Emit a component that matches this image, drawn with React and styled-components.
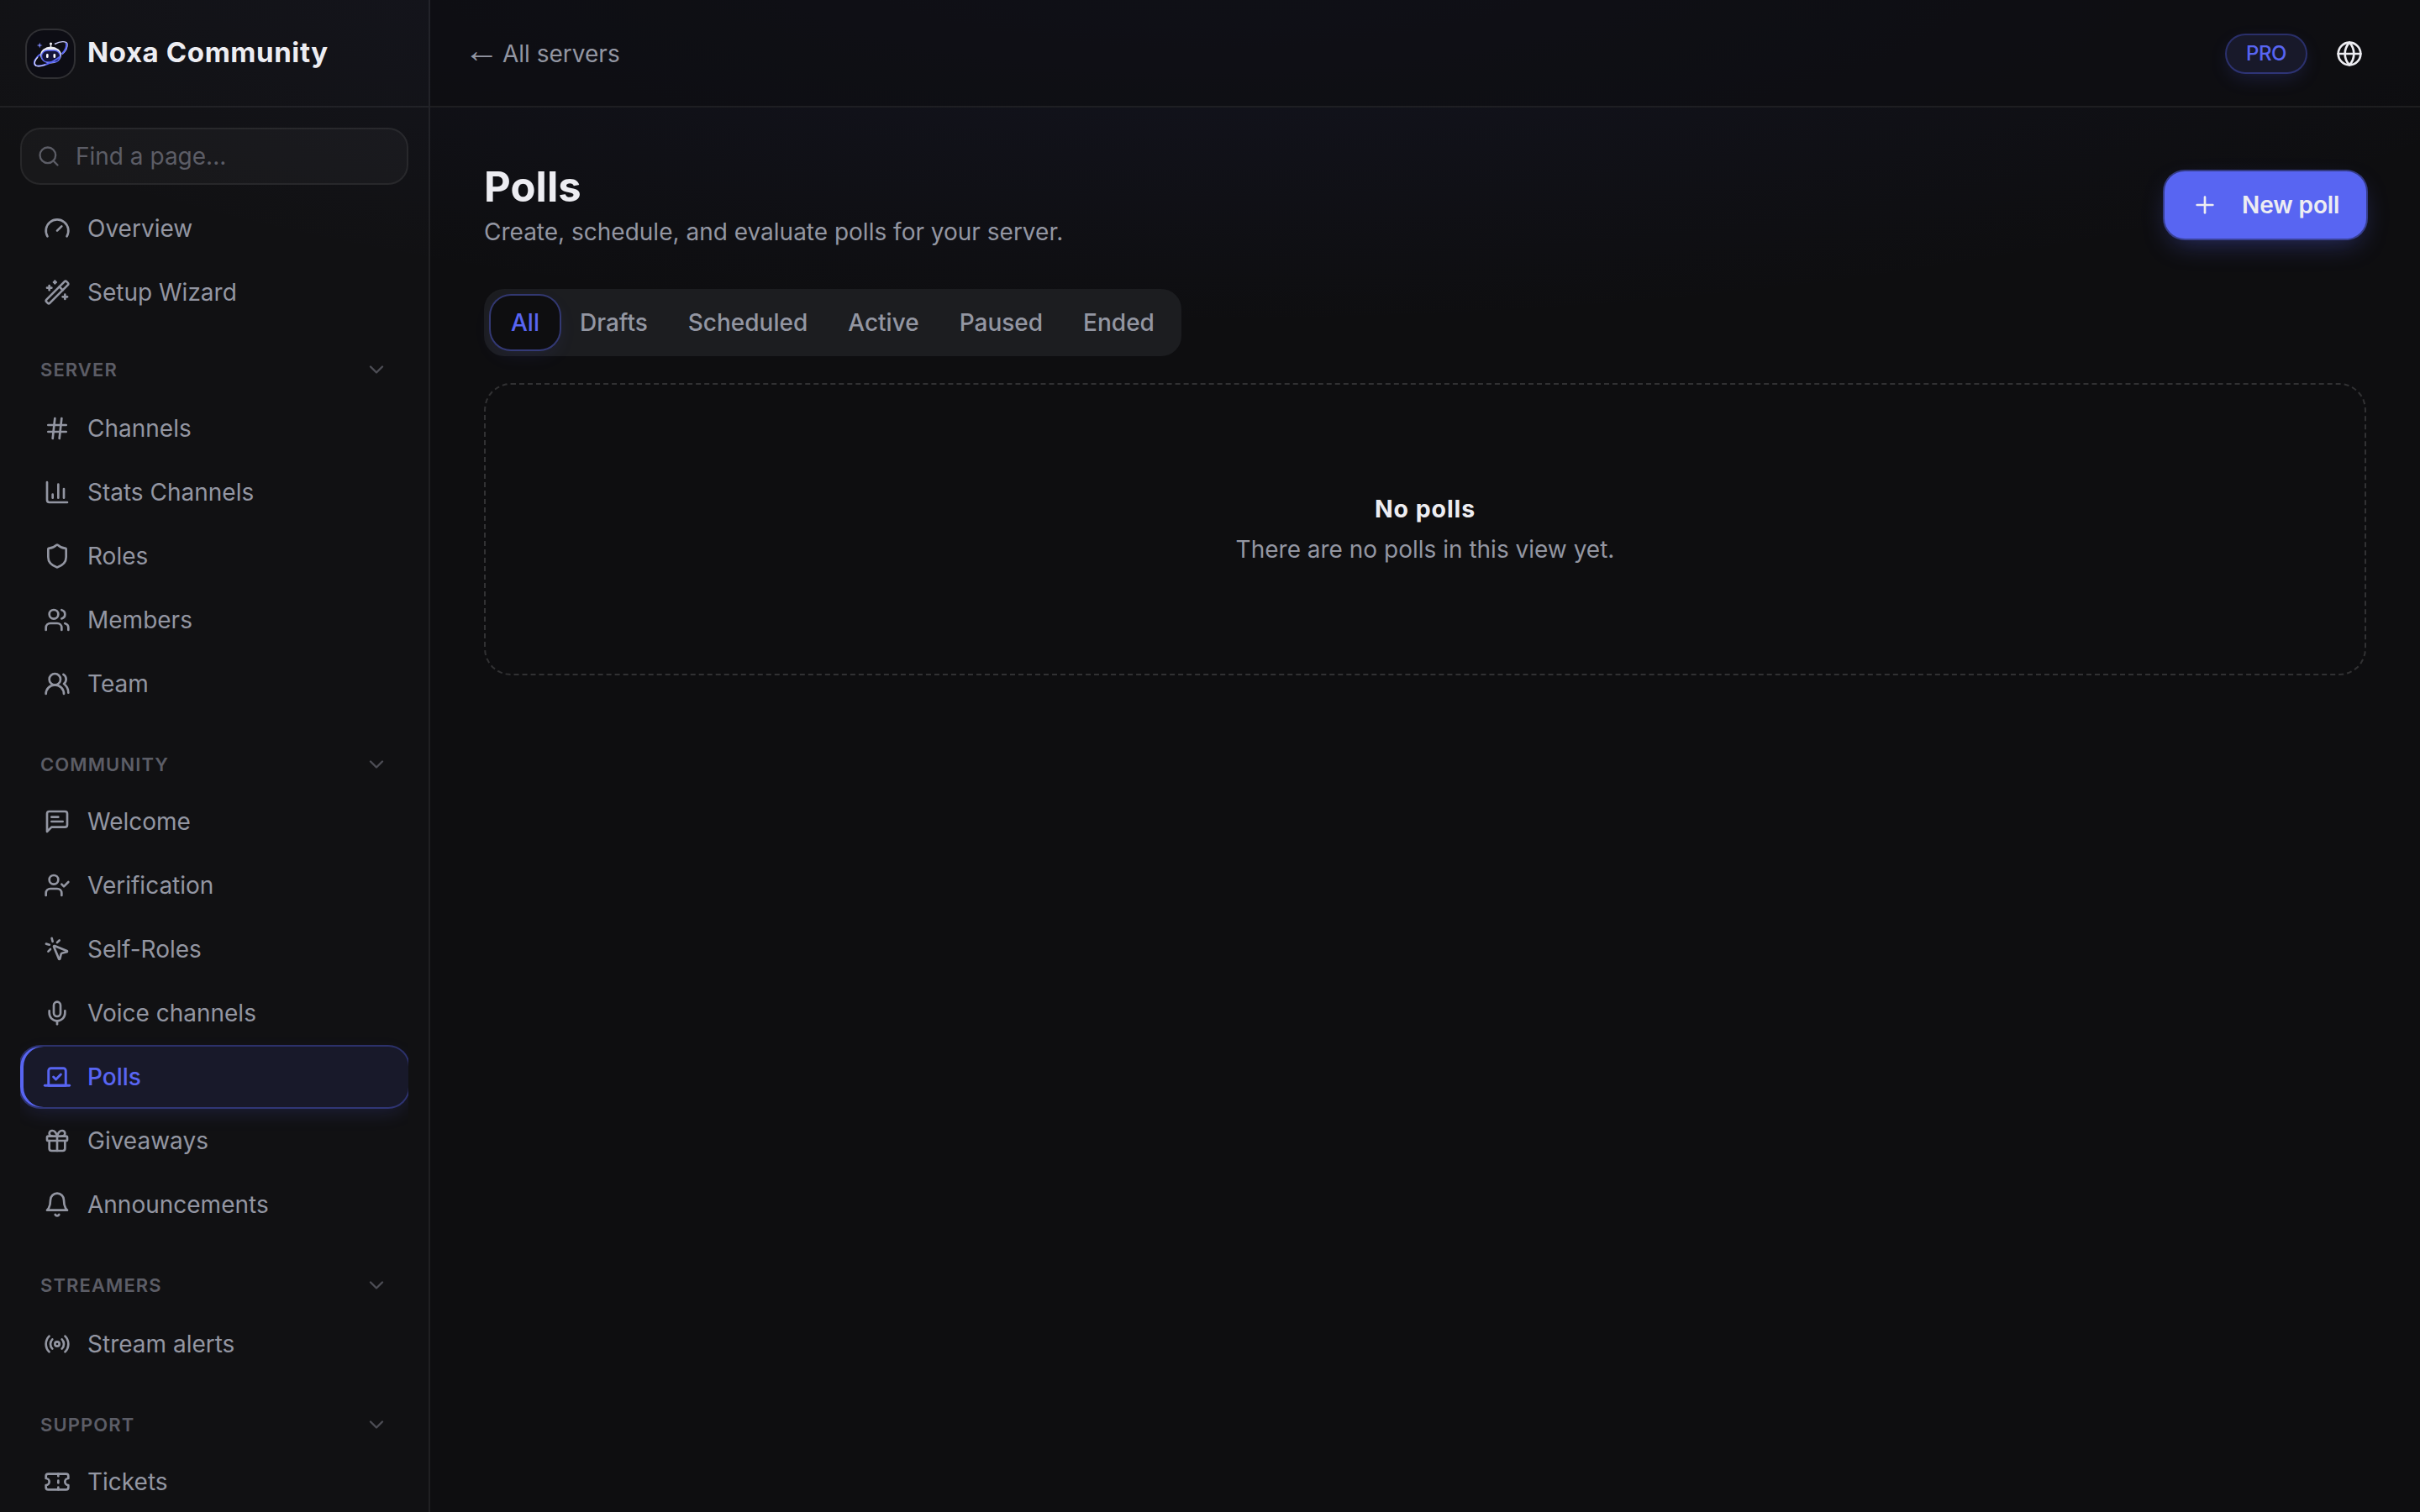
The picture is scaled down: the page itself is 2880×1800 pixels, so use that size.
import React from 'react'
import styled, { createGlobalStyle, css } from 'styled-components'
import {
  ChartColumn,
  ChevronDown,
  Gauge,
  Gift,
  Globe,
  Hash,
  Mic,
  MousePointerClick,
  Plus,
  Radio,
  Search,
  Shield,
  Ticket,
  UserCheck,
  Users,
  UsersRound,
  Vote,
  WandSparkles,
} from 'lucide-react'

const GlobalStyle = createGlobalStyle`
  :root {
    --c-bg: #0e0e10;
    --c-primary: #5865f2;
    --c-text: #ededf2;
    --c-muted: #9396a2;
    --c-faint: #5c5d66;
    --c-line: rgba(255, 255, 255, 0.065);
    --c-ring: rgba(88, 101, 242, 0.38);
  }

  * {
    box-sizing: border-box;
  }

  body {
    margin: 0;
    background: var(--c-bg);
    color: var(--c-text);
    font-family: Inter, sans-serif;
    font-size: 28px;
    line-height: 40px;
    -webkit-font-smoothing: antialiased;
  }

  button,
  input {
    font: inherit;
    color: inherit;
    border: none;
    background: none;
    padding: 0;
  }
`

const Page = styled.div`
  display: flex;
  height: 1800px;
  overflow: hidden;
  background: radial-gradient(
    ellipse 1730px 450px at 1440px -60px,
    rgba(88, 101, 242, 0.08),
    transparent
  );
`

const Sidebar = styled.aside`
  flex: 0 0 512px;
  min-width: 0;
  display: flex;
  flex-direction: column;
  border-right: 2px solid var(--c-line);
  background: rgba(255, 255, 255, 0.014);
`

const Brand = styled.div`
  flex: 0 0 128px;
  display: flex;
  align-items: center;
  gap: 16px;
  padding: 2px 32px 0;
  border-bottom: 2px solid var(--c-line);
`

const LogoFrame = styled.div`
  width: 56px;
  height: 56px;
  border-radius: 20px;
  background: #0d0d14;
  box-shadow: 0 0 0 2px rgba(255, 255, 255, 0.13);
`

const BrandName = styled.span`
  margin-top: -4px;
  font-size: 33px;
  font-weight: 650;
  letter-spacing: 0.6px;
  white-space: nowrap;
`

const SearchBox = styled.label`
  flex: 0 0 68px;
  display: flex;
  align-items: center;
  gap: 18px;
  margin: 24px 24px 16px;
  padding: 0 18px;
  border: 2px solid var(--c-line);
  border-radius: 24px;
  background: rgba(255, 255, 255, 0.03);
  color: var(--c-faint);

  input {
    flex: 1;
    min-width: 0;
    outline: none;
  }

  input::placeholder {
    color: var(--c-faint);
    opacity: 1;
  }
`

const Nav = styled.nav`
  flex: 1;
  margin: 0 24px;
  overflow: hidden;
`

const NavList = styled.div`
  display: flex;
  flex-direction: column;
  gap: 4px;
`

const NavItem = styled.a`
  flex: 0 0 72px;
  display: flex;
  align-items: center;
  gap: 20px;
  padding: 0 28px;
  border-radius: 24px;
  color: var(--c-muted);

  ${({ $active }) =>
    $active &&
    css`
      color: var(--c-primary);
      font-weight: 500;
      background: #18192a;
      box-shadow:
        inset 4px 0 0 var(--c-primary),
        0 0 0 2px var(--c-ring),
        0 8px 24px -4px rgba(88, 101, 242, 0.2);

      svg {
        transform: scale(1.1);
      }
    `}
`

const SectionHead = styled.div`
  display: flex;
  align-items: center;
  justify-content: space-between;
  height: 32px;
  margin: ${({ $top }) => $top}px 0 ${({ $bottom }) => $bottom}px;
  padding: 0 24px;
  color: var(--c-faint);
  font-size: 22px;
  font-weight: 600;
  letter-spacing: 1.1px;
  text-transform: uppercase;

  svg {
    opacity: 0.8;
  }
`

const Main = styled.div`
  flex: 1;
  min-width: 0;
`

const TopBar = styled.header`
  display: flex;
  align-items: center;
  height: 128px;
  padding: 2px 68px 0 48px;
  border-bottom: 2px solid var(--c-line);
  background: rgba(14, 14, 16, 0.6);
`

const BackLink = styled.a`
  display: flex;
  align-items: flex-start;
  margin-right: auto;
  color: var(--c-muted);
`

const Arrow = styled.span`
  width: 46px;
  margin-left: -8px;
  font-family: 'Liberation Serif', serif;
  font-size: 42px;
  line-height: 32px;
`

const Plan = styled.span`
  width: 94px;
  margin-right: 36px;
  border-radius: 22px;
  background: #18192a;
  box-shadow:
    0 0 0 2px var(--c-ring),
    0 8px 24px -4px rgba(88, 101, 242, 0.22);
  color: var(--c-primary);
  font-size: 24px;
  font-weight: 500;
  line-height: 44px;
  letter-spacing: -0.4px;
  text-align: center;
`

const IconButton = styled.button`
  display: flex;
`

const Content = styled.main`
  padding: 64px;
`

const PageHead = styled.div`
  display: flex;
  align-items: center;
  justify-content: space-between;
  height: 104px;
`

const Title = styled.h1`
  margin: 0 0 2px;
  font-size: 49px;
  font-weight: 750;
  line-height: 62px;
  letter-spacing: 0.1px;
`

const Lead = styled.p`
  margin: 0;
  color: var(--c-muted);
`

const NewPoll = styled.button`
  display: flex;
  align-items: center;
  gap: 28px;
  width: 240px;
  height: 80px;
  padding: 0 0 0 32px;
  border-radius: 24px;
  background: var(--c-primary);
  box-shadow:
    0 0 0 2px rgba(88, 101, 242, 0.5),
    0 12px 32px -8px rgba(88, 101, 242, 0.4);
  font-weight: 600;
  letter-spacing: -0.1px;
  white-space: nowrap;
`

const Tabs = styled.div`
  display: flex;
  width: fit-content;
  margin: 48px 0 32px;
  padding: 8px;
  border-radius: 24px;
  background: #1c1d20;
`

const Tab = styled.button`
  height: 64px;
  padding: 0 24px;
  border-radius: 24px;
  color: var(--c-muted);
  font-weight: 500;

  ${({ $active }) =>
    $active &&
    css`
      color: var(--c-primary);
      background: var(--c-bg);
      box-shadow:
        0 0 0 2px var(--c-ring),
        0 8px 24px -4px rgba(88, 101, 242, 0.12);
    `}
`

const EmptyState = styled.section`
  display: flex;
  flex-direction: column;
  align-items: center;
  justify-content: center;
  gap: 8px;
  height: 348px;
  border: 2px dashed rgba(255, 255, 255, 0.15);
  border-radius: 32px;
  color: var(--c-muted);

  h2 {
    margin: 0;
    color: var(--c-text);
    font-size: 28.5px;
    font-weight: 700;
    letter-spacing: 0.9px;
  }

  p {
    margin: 0;
  }
`

const Outline = ({ size = 32, strokeWidth = 2, children }) => (
  <svg
    width={size}
    height={size}
    viewBox="0 0 24 24"
    fill="none"
    stroke="currentColor"
    strokeWidth={strokeWidth}
    strokeLinecap="round"
    strokeLinejoin="round"
  >
    {children}
  </svg>
)

const MessageIcon = (props) => (
  <Outline {...props}>
    <path d="M21 15a2 2 0 0 1-2 2H7l-4 4V5a2 2 0 0 1 2-2h14a2 2 0 0 1 2 2z" />
    <path d="M13 8H7M17 12H7" />
  </Outline>
)

const BellIcon = (props) => (
  <Outline {...props}>
    <path d="M6 8a6 6 0 0 1 12 0c0 7 3 9 3 9H3s3-2 3-9" />
    <path d="M10.3 21a1.94 1.94 0 0 0 3.4 0" />
  </Outline>
)

// Robot head with a planet ring around it
const Logo = () => (
  <svg width="56" height="56" viewBox="0 0 56 56" fill="none">
    <path
      d="M33 16.5C40 13 46.5 12.5 48 16C48.5 20 46 25 42 28.5"
      stroke="#c9ccf8"
      strokeWidth="1.4"
    />
    <path
      d="M46.5 15C48 19 46 24 41.5 28.5"
      stroke="#5865f2"
      strokeWidth="2"
    />
    <path d="M28.5 20V16" stroke="#ededf2" strokeWidth="1.4" />
    <circle cx="28.5" cy="16" r="1.6" fill="#ededf2" />
    <ellipse cx="28.5" cy="29.5" rx="12.5" ry="10" fill="#ededf2" />
    <rect
      x="17.5"
      y="24"
      width="22"
      height="14"
      rx="7"
      fill="#15163a"
      stroke="#5865f2"
      strokeWidth="1.4"
    />
    <rect x="23" y="28" width="2.6" height="5" rx="1.3" fill="#fff" />
    <rect x="31.5" y="28" width="2.6" height="5" rx="1.3" fill="#fff" />
    <path
      d="M16 28.5C10 33 7 38.5 10 41.5C15 44.5 29 40 40 31"
      stroke="#5865f2"
      strokeWidth="2"
    />
    <path
      d="M13 32C9 36 8 40 11 42.5C14 43.5 18 42.5 22 41"
      stroke="#d9dbfa"
      strokeWidth="1.2"
    />
    <path
      d="M15.2 14.5L16 17.2L18.7 18L16 18.8L15.2 21.5L14.4 18.8L11.7 18L14.4 17.2Z"
      fill="#7d87f7"
    />
  </svg>
)

const TOP_LINKS = [
  { label: 'Overview', icon: Gauge },
  { label: 'Setup Wizard', icon: WandSparkles },
]

const SECTIONS = [
  {
    title: 'Server',
    top: 40,
    bottom: 18,
    links: [
      { label: 'Channels', icon: Hash },
      { label: 'Stats Channels', icon: ChartColumn },
      { label: 'Roles', icon: Shield },
      { label: 'Members', icon: Users },
      { label: 'Team', icon: UsersRound },
    ],
  },
  {
    title: 'Community',
    top: 44,
    bottom: 16,
    links: [
      { label: 'Welcome', icon: MessageIcon },
      { label: 'Verification', icon: UserCheck },
      { label: 'Self-Roles', icon: MousePointerClick },
      { label: 'Voice channels', icon: Mic },
      { label: 'Polls', icon: Vote, active: true },
      { label: 'Giveaways', icon: Gift },
      { label: 'Announcements', icon: BellIcon },
    ],
  },
  {
    title: 'Streamers',
    top: 44,
    bottom: 18,
    links: [{ label: 'Stream alerts', icon: Radio }],
  },
  {
    title: 'Support',
    top: 44,
    bottom: 16,
    links: [{ label: 'Tickets', icon: Ticket }],
  },
]

const FILTERS = ['All', 'Drafts', 'Scheduled', 'Active', 'Paused', 'Ended']

const Links = ({ links }) => (
  <NavList>
    {links.map(({ label, icon: Icon, active }) => (
      <NavItem key={label} $active={active}>
        <Icon size={32} strokeWidth={2} />
        {label}
      </NavItem>
    ))}
  </NavList>
)

class App extends React.Component {
  state = { filter: 'All' }

  render() {
    const { filter } = this.state

    return (
      <>
        <GlobalStyle />
        <Page>
          <Sidebar>
            <Brand>
              <LogoFrame>
                <Logo />
              </LogoFrame>
              <BrandName>Noxa Community</BrandName>
            </Brand>
            <SearchBox>
              <Search size={28} strokeWidth={2} />
              <input placeholder="Find a page..." />
            </SearchBox>
            <Nav>
              <Links links={TOP_LINKS} />
              {SECTIONS.map(({ title, top, bottom, links }) => (
                <React.Fragment key={title}>
                  <SectionHead $top={top} $bottom={bottom}>
                    {title}
                    <ChevronDown size={28} strokeWidth={2} />
                  </SectionHead>
                  <Links links={links} />
                </React.Fragment>
              ))}
            </Nav>
          </Sidebar>
          <Main>
            <TopBar>
              <BackLink>
                <Arrow>←</Arrow>
                All servers
              </BackLink>
              <Plan>PRO</Plan>
              <IconButton>
                <Globe size={32} strokeWidth={2} />
              </IconButton>
            </TopBar>
            <Content>
              <PageHead>
                <div>
                  <Title>Polls</Title>
                  <Lead>
                    Create, schedule, and evaluate polls for your server.
                  </Lead>
                </div>
                <NewPoll>
                  <Plus size={32} strokeWidth={2} />
                  New poll
                </NewPoll>
              </PageHead>
              <Tabs>
                {FILTERS.map((name) => (
                  <Tab
                    key={name}
                    $active={name === filter}
                    onClick={() => this.setState({ filter: name })}
                  >
                    {name}
                  </Tab>
                ))}
              </Tabs>
              <EmptyState>
                <h2>No polls</h2>
                <p>There are no polls in this view yet.</p>
              </EmptyState>
            </Content>
          </Main>
        </Page>
      </>
    )
  }
}

export default App
